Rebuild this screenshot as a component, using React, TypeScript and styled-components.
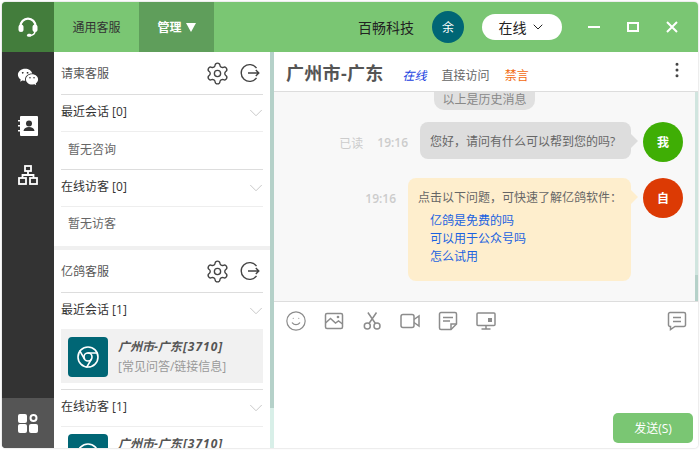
import React from "react";
import styled, { createGlobalStyle } from "styled-components";
import { Chrome, ChevronDown, Settings, Smile, MoreVertical } from "lucide-react";
import { RiWechatFill } from "react-icons/ri";

const GlobalStyle = createGlobalStyle`
  html, body { margin: 0; padding: 0; background: #fff; }
  * { box-sizing: border-box; }
  body { font-family: "Open Sans", "Noto Sans CJK SC", sans-serif; font-size: 12px; color: #555; }
`;

const Desktop = styled.div`
  width: 700px;
  height: 450px;
  padding: 2px;
  overflow: hidden;
`;

const Window = styled.div`
  width: 696px;
  height: 446px;
  display: flex;
  flex-direction: column;
  border-radius: 4px;
  overflow: hidden;
  box-shadow: 0 0 2px #bbb;
`;

const TitleBar = styled.header`
  height: 50px;
  flex: none;
  display: flex;
  align-items: stretch;
  background: #7ac673;
`;

const LogoCell = styled.div`
  width: 52px;
  display: flex;
  align-items: center;
  justify-content: center;
  background: #437d3c;
`;

const Tab = styled.div<{ $active?: boolean }>`
  width: ${({ $active }) => ($active ? "75px" : "85px")};
  display: flex;
  align-items: center;
  justify-content: center;
  gap: 4px;
  color: ${({ $active }) => ($active ? "#fff" : "#333")};
  font-weight: ${({ $active }) => ($active ? 700 : 400)};
  background: ${({ $active }) => ($active ? "#5f9e5b" : "transparent")};
`;

const TitleRight = styled.div`
  margin-left: auto;
  padding-right: 7px;
  display: flex;
  align-items: center;
`;

const Company = styled.span`
  font-size: 14px;
  color: #222;
  margin-right: 18px;
`;

const UserBadge = styled.div`
  width: 32px;
  height: 32px;
  border-radius: 50%;
  background: #006675;
  color: #fff;
  display: flex;
  align-items: center;
  justify-content: center;
  margin-right: 18px;
`;

const StatusPill = styled.div`
  width: 80px;
  height: 26px;
  border-radius: 13px;
  background: #fff;
  color: #222;
  font-size: 14px;
  display: flex;
  align-items: center;
  justify-content: center;
  gap: 3px;
  margin-right: 12px;
`;

const WinButton = styled.div`
  width: 39px;
  height: 50px;
  display: flex;
  align-items: center;
  justify-content: center;
`;

const Body = styled.div`
  flex: 1;
  min-height: 0;
  display: flex;
`;

const SideNav = styled.nav`
  width: 52px;
  flex: none;
  background: #333;
  display: flex;
  flex-direction: column;
  align-items: center;
`;

const NavItem = styled.div`
  height: 50px;
  width: 100%;
  display: flex;
  align-items: center;
  justify-content: center;
  margin-bottom: -1px;
`;

const NavBottom = styled(NavItem)`
  margin-top: auto;
  margin-bottom: 0;
  background: #555;
`;

const ListPanel = styled.aside`
  width: 216px;
  flex: none;
  background: #fff;
  overflow: hidden;
`;

const Group = styled.section<{ $last?: boolean }>`
  padding: 0 7px;
  border-bottom: ${({ $last }) => ($last ? "0" : "4px solid #f0f0f0")};
`;

const GroupHead = styled.div`
  height: 43px;
  padding-right: 3px;
  display: flex;
  align-items: center;
  gap: 10px;
  border-bottom: 1px solid #ddd;
  color: #555;
`;

const GroupName = styled.span`
  flex: 1;
`;

const SubHead = styled.div`
  height: 37px;
  padding-bottom: 4px;
  display: flex;
  align-items: center;
  justify-content: space-between;
  color: #333;
  border-bottom: 1px solid #eee;
  svg {
    margin: 4px -4px 0 0;
  }
`;

const Empty = styled.div`
  height: 38px;
  padding: 0 0 4px 7px;
  display: flex;
  align-items: center;
  color: #666;
  border-bottom: 1px solid #ddd;
`;

const EmptyLast = styled(Empty)`
  height: 39px;
  padding-bottom: 8px;
  border-bottom: 0;
`;

const VisitorWrap = styled.div`
  padding: 0 0 6px;
  border-bottom: 1px solid #ddd;
`;

const Visitor = styled.div<{ $active?: boolean }>`
  height: 54px;
  margin-top: -1px;
  padding: 8px 7px;
  display: flex;
  gap: 10px;
  background: ${({ $active }) => ($active ? "#f1f1f1" : "transparent")};
`;

const VisitorIcon = styled.div`
  width: 40px;
  height: 40px;
  border-radius: 4px;
  background: #006675;
  flex: none;
  display: flex;
  align-items: center;
  justify-content: center;
`;

const VisitorText = styled.div`
  padding-top: 1px;
  display: flex;
  flex-direction: column;
  gap: 3px;
  line-height: 17px;
`;

const VisitorName = styled.span`
  font-weight: 700;
  font-style: italic;
  color: #555;
  em {
    font-style: italic;
    letter-spacing: 1px;
    margin-left: 1px;
  }
`;

const VisitorNote = styled.span`
  color: #999;
`;

const Scrollbar = styled.div`
  width: 4px;
  flex: none;
  background: linear-gradient(#b5d1c9 0 356px, #d8efe8 356px);
`;

const ChatPanel = styled.main`
  flex: 1;
  min-width: 0;
  display: flex;
  flex-direction: column;
  background: #fff;
`;

const ChatHead = styled.div`
  height: 40px;
  flex: none;
  padding: 0 12px;
  display: flex;
  align-items: center;
  border-bottom: 1px solid #ddd;
`;

const ChatTitle = styled.h1`
  margin: 0 19px 0 0;
  font-size: 18px;
  font-weight: 700;
  letter-spacing: 0.3px;
  color: #555;
`;

const ChatMeta = styled.span<{ $color?: string; $italic?: boolean }>`
  color: ${({ $color }) => $color || "#666"};
  font-style: ${({ $italic }) => ($italic ? "italic" : "normal")};
  margin: 6px 15px 0 0;
`;

const HeadMenu = styled.div`
  margin: -3px -1px 0 auto;
  display: flex;
  color: #444;
`;

const Messages = styled.div`
  height: 209px;
  flex: none;
  padding-right: 3px;
  background: linear-gradient(#d0e5df 0 183px, #b5d1c9 183px) right / 3px 100% no-repeat, #f8f8f8;
  overflow: hidden;
  display: flex;
  flex-direction: column;
  align-items: stretch;
`;

const HistoryTag = styled.div`
  align-self: center;
  height: 19px;
  margin-top: -1px;
  padding: 0 8px;
  border-radius: 0 0 10px 10px;
  background: #e0e0e0;
  color: #888;
  line-height: 18px;
`;

const MessageRow = styled.div<{ $top: number }>`
  margin-top: ${({ $top }) => $top}px;
  padding-right: 12px;
  display: flex;
  justify-content: flex-end;
  align-items: flex-start;
`;

const TimeInfo = styled.div`
  margin-top: 12px;
  margin-right: 12px;
  display: flex;
  gap: 14px;
  color: #ccc;
  font-weight: 600;
`;

const ReadMark = styled.span`
  font-weight: 400;
`;

const Bubble = styled.div<{ $tone: "grey" | "yellow" }>`
  position: relative;
  width: ${({ $tone }) => ($tone === "grey" ? "211px" : "223px")};
  height: ${({ $tone }) => ($tone === "grey" ? "37px" : "103px")};
  padding: 10px 0 0 10px;
  border-radius: 8px;
  white-space: nowrap;
  color: #666;
  background: ${({ $tone }) => ($tone === "grey" ? "#ddd" : "#feeecd")};
  &::after {
    content: "";
    position: absolute;
    right: -7px;
    top: 12px;
    border-left: 7px solid ${({ $tone }) => ($tone === "grey" ? "#ddd" : "#feeecd")};
    border-top: 7px solid transparent;
    border-bottom: 7px solid transparent;
  }
`;

const BubbleLinks = styled.div`
  margin-top: 6px;
  padding-left: 12px;
  display: flex;
  flex-direction: column;
  color: #1a62e0;
  line-height: 18px;
`;

const Avatar = styled.div<{ $bg: string }>`
  width: 40px;
  height: 40px;
  margin-left: 12px;
  border-radius: 50%;
  background: ${({ $bg }) => $bg};
  color: #fff;
  font-weight: 700;
  display: flex;
  align-items: center;
  justify-content: center;
`;

const Composer = styled.div`
  flex: 1;
  display: flex;
  flex-direction: column;
  border-top: 1px solid #ddd;
  padding: 0 5px 5px 0;
`;

const Toolbar = styled.div`
  height: 38px;
  padding: 0 10px 0 12px;
  display: flex;
  align-items: center;
  gap: 18px;
  color: #8c8c8c;
`;

const ToolIcon = styled.svg`
  width: 20px;
  height: 20px;
  flex: none;
  fill: none;
  stroke: #8c8c8c;
  stroke-width: 1.5;
`;

const SmileWrap = styled.div`
  width: 20px;
  height: 20px;
  display: flex;
  align-items: center;
  justify-content: center;
  svg {
    flex: none;
  }
`;

const NoteButton = styled.div`
  margin-left: auto;
  margin-right: -4px;
  display: flex;
`;

const SendRow = styled.div`
  margin-top: auto;
  display: flex;
  justify-content: flex-end;
`;

const SendButton = styled.button`
  width: 80px;
  height: 30px;
  border: 0;
  border-radius: 5px;
  background: #7ac673;
  color: #fff;
  font: inherit;
`;

const LogoutIcon = () => (
  <svg width="20" height="20" viewBox="0 0 20 20" fill="none" stroke="#444" strokeWidth="1.4">
    <path d="M16.5 5.2A8.4 8.4 0 1 0 16.5 14.8" />
    <path d="M8 10h11M15.8 7l3 3-3 3" />
  </svg>
);

const GroupHeader = ({ name }: { name: string }) => (
  <GroupHead>
    <GroupName>{name}</GroupName>
    <Settings size={25} color="#444" strokeWidth={1.3} />
    <LogoutIcon />
  </GroupHead>
);

const SubHeader = ({ label }: { label: string }) => (
  <SubHead>
    {label}
    <ChevronDown size={22} color="#c4c4c4" strokeWidth={1} />
  </SubHead>
);

const VisitorRow = ({ active }: { active?: boolean }) => (
  <Visitor $active={active}>
    <VisitorIcon>
      <Chrome size={24} color="#fff" strokeWidth={1.6} />
    </VisitorIcon>
    <VisitorText>
      <VisitorName>
        广州市-广东<em>[3710]</em>
      </VisitorName>
      <VisitorNote>[常见问答/链接信息]</VisitorNote>
    </VisitorText>
  </Visitor>
);

export default function App() {
  return (
    <Desktop>
      <GlobalStyle />
      <Window>
        <TitleBar>
          <LogoCell>
            <svg width="20" height="20" viewBox="0 0 20 20" fill="#fff">
              <path d="M2.6 9A7.400 7.400 0 0 1 17.400 9" fill="none" stroke="#fff" strokeWidth="2.400" />
              <rect x="0.500" y="7.500" width="5" height="7.500" rx="2.500" />
              <rect x="14.500" y="7.500" width="5" height="7.500" rx="2.500" />
              <path d="M17 14c0 3-2.400 4.400-5.400 4.400" fill="none" stroke="#fff" strokeWidth="1.500" />
              <rect x="9" y="16.800" width="4.500" height="3" rx="1.500" />
            </svg>
          </LogoCell>
          <Tab>通用客服</Tab>
          <Tab $active>
            管理
            <svg width="10" height="9" viewBox="0 0 10 9" fill="#fff">
              <path d="M0 0h10L5 9z" />
            </svg>
          </Tab>
          <TitleRight>
            <Company>百畅科技</Company>
            <UserBadge>余</UserBadge>
            <StatusPill>
              在线
              <ChevronDown size={16} strokeWidth={1.5} />
            </StatusPill>
            <WinButton>
              <svg width="12" height="12" viewBox="0 0 12 12" stroke="#fff" strokeWidth="2">
                <path d="M0 6h12" />
              </svg>
            </WinButton>
            <WinButton>
              <svg width="12" height="10" viewBox="0 0 12 10" fill="none" stroke="#fff" strokeWidth="2">
                <rect x="1" y="1" width="10" height="8" />
              </svg>
            </WinButton>
            <WinButton>
              <svg width="12" height="12" viewBox="0 0 12 12" stroke="#fff" strokeWidth="2">
                <path d="M1 1l10 10M11 1L1 11" />
              </svg>
            </WinButton>
          </TitleRight>
        </TitleBar>
        <Body>
          <SideNav>
            <NavItem>
              <RiWechatFill size={22} color="#fff" />
            </NavItem>
            <NavItem>
              <svg width="20" height="22" viewBox="0 0 20 22">
                <path fill="#fff" d="M3 1h16a1 1 0 0 1 1 1v18a1 1 0 0 1-1 1H3a1 1 0 0 1-1-1V2a1 1 0 0 1 1-1z" />
                <path fill="#fff" d="M0 5h3v1.6H0zM0 10h3v1.6H0zM0 15h3v1.6H0z" />
                <circle cx="11" cy="8.5" r="3" fill="#333" />
                <path fill="#333" d="M5.5 16c.5-3 2.700-4 5.500-4s5 1 5.500 4z" />
              </svg>
            </NavItem>
            <NavItem>
              <svg width="20" height="20" viewBox="0 0 20 20" fill="none" stroke="#fff" strokeWidth="1.8">
                <rect x="7" y="1" width="6" height="5" />
                <rect x="1" y="13" width="7" height="6" />
                <rect x="12" y="13" width="7" height="6" />
                <path d="M10 6v4M4.500 13v-3h11v3" />
              </svg>
            </NavItem>
            <NavBottom>
              <svg width="20" height="20" viewBox="0 0 20 20" fill="#fff">
                <rect x="0" y="1" width="9" height="9" rx="2" />
                <rect x="0" y="11" width="9" height="9" rx="2" />
                <rect x="11" y="11" width="9" height="9" rx="2" />
                <circle cx="15.500" cy="5" r="3" fill="none" stroke="#fff" strokeWidth="2" />
              </svg>
            </NavBottom>
          </SideNav>
          <ListPanel>
            <Group>
              <GroupHeader name="请柬客服" />
              <SubHeader label="最近会话 [0]" />
              <Empty>暂无咨询</Empty>
              <SubHeader label="在线访客 [0]" />
              <EmptyLast>暂无访客</EmptyLast>
            </Group>
            <Group $last>
              <GroupHeader name="亿鸽客服" />
              <SubHeader label="最近会话 [1]" />
              <VisitorWrap>
                <VisitorRow active />
              </VisitorWrap>
              <SubHeader label="在线访客 [1]" />
              <VisitorRow />
            </Group>
          </ListPanel>
          <Scrollbar />
          <ChatPanel>
            <ChatHead>
              <ChatTitle>广州市-广东</ChatTitle>
              <ChatMeta $color="#1a3fe0" $italic>在线</ChatMeta>
              <ChatMeta>直接访问</ChatMeta>
              <ChatMeta $color="#f26a10">禁言</ChatMeta>
              <HeadMenu>
                <MoreVertical size={20} strokeWidth={1.6} />
              </HeadMenu>
            </ChatHead>
            <Messages>
              <HistoryTag>以上是历史消息</HistoryTag>
              <MessageRow $top={12}>
                <TimeInfo>
                  <ReadMark>已读</ReadMark>
                  <span>19:16</span>
                </TimeInfo>
                <Bubble $tone="grey">您好，请问有什么可以帮到您的吗?</Bubble>
                <Avatar $bg="#3fae05">我</Avatar>
              </MessageRow>
              <MessageRow $top={16}>
                <TimeInfo>
                  <span>19:16</span>
                </TimeInfo>
                <Bubble $tone="yellow">
                  点击以下问题，可快速了解亿鸽软件：
                  <BubbleLinks>
                    <span>亿鸽是免费的吗</span>
                    <span>可以用于公众号吗</span>
                    <span>怎么试用</span>
                  </BubbleLinks>
                </Bubble>
                <Avatar $bg="#dc3a04">自</Avatar>
              </MessageRow>
            </Messages>
            <Composer>
              <Toolbar>
                <SmileWrap>
                  <Smile size={22} strokeWidth={1.3} />
                </SmileWrap>
                <ToolIcon viewBox="0 0 20 20">
                  <rect x="1.500" y="2.500" width="17" height="15" rx="1.500" />
                  <path d="M1.500 12l5-4.500 5 4.500 3-2 4 3" />
                  <circle cx="14" cy="6" r="0.600" />
                </ToolIcon>
                <ToolIcon viewBox="0 0 20 20">
                  <circle cx="5.300" cy="15" r="3" />
                  <circle cx="15" cy="15" r="3" />
                  <path d="M7 12.500L14.500 1.500M13.400 12.500L5.900 1.500" />
                </ToolIcon>
                <ToolIcon viewBox="0 0 20 20">
                  <rect x="1" y="3.500" width="13" height="13" rx="2" />
                  <path d="M14 8.500l5-3.500v10l-5-3.500" />
                </ToolIcon>
                <ToolIcon viewBox="0 0 20 20">
                  <path d="M13 18.500H3a1.500 1.500 0 0 1-1.500-1.500V3A1.500 1.500 0 0 1 3 1.500h14A1.500 1.500 0 0 1 18.500 3v10z" />
                  <path d="M5 6.500h10M5 10h7M13 18.500V13h5.500" />
                </ToolIcon>
                <ToolIcon viewBox="0 0 20 20">
                  <rect x="1" y="2" width="18" height="12.500" rx="1" />
                  <path d="M10 14.500v3M5.500 18h9" />
                  <rect x="12" y="7" width="4" height="4" fill="#8c8c8c" stroke="none" />
                </ToolIcon>
                <NoteButton>
                  <ToolIcon viewBox="0 0 20 20">
                    <path d="M3 1.500h14A1.500 1.500 0 0 1 18.500 3v11a1.500 1.500 0 0 1-1.500 1.500H8L3.500 18.500v-3H3A1.500 1.500 0 0 1 1.500 14V3A1.500 1.500 0 0 1 3 1.500z" />
                    <path d="M6 6.500h8M6 10.500h8" />
                  </ToolIcon>
                </NoteButton>
              </Toolbar>
              <SendRow>
                <SendButton>发送(S)</SendButton>
              </SendRow>
            </Composer>
          </ChatPanel>
        </Body>
      </Window>
    </Desktop>
  );
}
